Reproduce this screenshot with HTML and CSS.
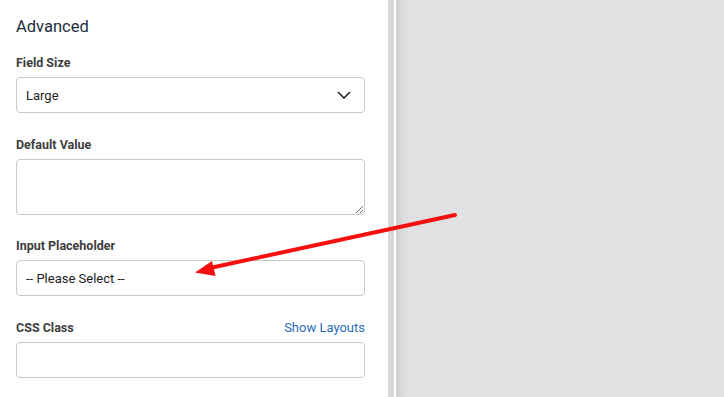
FILE: index.html
```html
<!DOCTYPE html>
<html lang="en">
<head>
<meta charset="utf-8">
<title>Advanced</title>
<link rel="stylesheet" href="styles.css">
</head>
<body>
<div class="page">
  <aside class="panel">
    <h2 class="heading">Advanced</h2>
    <div class="field">
      <div class="label-row"><label class="label">Field Size</label></div>
      <div class="select">
        <span class="value">Large</span>
        <svg class="chevron" width="14" height="8" viewBox="0 0 14 8"><path d="M1 1 L7 7 L13 1" fill="none" stroke="#222" stroke-width="1.6"/></svg>
      </div>
    </div>
    <div class="field">
      <div class="label-row"><label class="label">Default Value</label></div>
      <textarea class="textarea"></textarea>
    </div>
    <div class="field">
      <div class="label-row"><label class="label">Input Placeholder</label></div>
      <div class="input"><span class="value">-- Please Select --</span></div>
    </div>
    <div class="field">
      <div class="label-row"><label class="label">CSS Class</label><a class="link">Show Layouts</a></div>
      <div class="input"></div>
    </div>
  </aside>
  <div class="scrollbar"></div>
  <div class="gutter"></div>
  <main class="canvas"></main>
  <svg class="arrow" width="724" height="397" viewBox="0 0 724 397">
    <line x1="455" y1="215" x2="210" y2="268" stroke="#f50f0f" stroke-width="4" stroke-linecap="round"/>
    <polygon points="195,272.5 212,261 215.5,276" fill="#f50f0f"/>
  </svg>
</div>
</body>
</html>
```
FILE: styles.css
```css
html, body {
  margin: 0;
  padding: 0;
  background: #ffffff;
}
body {
  font-family: Roboto, "Liberation Sans", Arial, sans-serif;
}
.page {
  position: relative;
  display: flex;
  width: 724px;
  height: 397px;
  overflow: hidden;
}
.panel {
  width: 388px;
  box-sizing: border-box;
  padding: 17px 23px 0 16px;
  background: #ffffff;
  flex-shrink: 0;
}
.heading {
  margin: 0 0 18px 0;
  font-size: 16.5px;
  line-height: 20px;
  font-weight: 400;
  color: #1f2d40;
}
.field {
  margin-bottom: 23.5px;
}
.label-row {
  display: flex;
  justify-content: space-between;
  align-items: baseline;
  height: 16px;
  margin-bottom: 6px;
}
.label {
  font-size: 12.5px;
  line-height: 15px;
  font-weight: 700;
  color: #3d3d3d;
}
.link {
  font-size: 13px;
  line-height: 15px;
  color: #2c6db8;
  cursor: pointer;
}
.select, .input {
  display: flex;
  align-items: center;
  justify-content: space-between;
  box-sizing: border-box;
  height: 36px;
  border: 1px solid #c9c9c9;
  border-radius: 4px;
  padding: 0 13px 0 9px;
  background: #fff;
}
.value {
  font-size: 13px;
  color: #222;
}
.chevron {
  display: block;
}
.textarea {
  display: block;
  box-sizing: border-box;
  width: 100%;
  height: 56px;
  margin: 0;
  border: 1px solid #c9c9c9;
  border-radius: 4px;
  background: #fff;
  font-family: inherit;
}
.scrollbar {
  width: 6px;
  flex-shrink: 0;
  background: #d9d9d9;
}
.gutter {
  width: 2px;
  flex-shrink: 0;
  background: #ffffff;
}
.canvas {
  flex: 1;
  background: linear-gradient(to right, #d0d0d0 0px, #dddddd 8px, #e1e1e1 14px, #e1e1e1 100%);
}
.arrow {
  position: absolute;
  left: 0;
  top: 0;
  pointer-events: none;
}
```
